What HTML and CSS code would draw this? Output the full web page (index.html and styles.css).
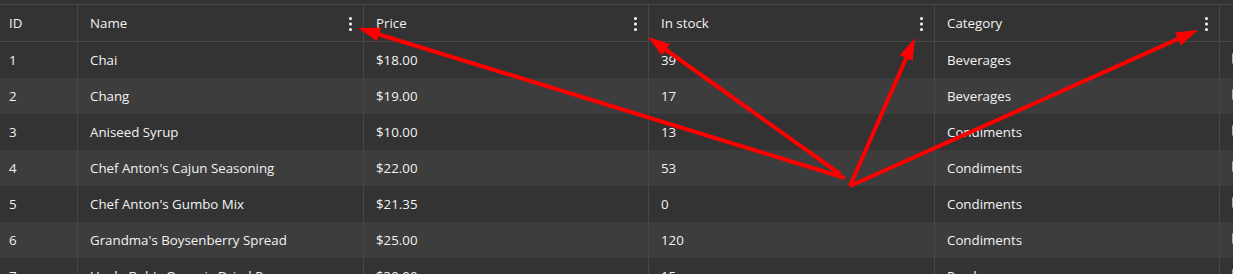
FILE: index.html
```html
<!DOCTYPE html>
<html>
<head>
<meta charset="utf-8">
<link rel="stylesheet" href="styles.css">
</head>
<body>
<div class="page">
  <div class="topbar"></div>
  <div class="grid">
    <div class="row head">
      <div class="cell id">ID</div>
      <div class="cell"><span>Name</span><svg class="kebab" width="3" height="14" viewBox="0 0 3 14"><circle cx="1.5" cy="1.5" r="1.5"/><circle cx="1.5" cy="7" r="1.5"/><circle cx="1.5" cy="12.5" r="1.5"/></svg></div>
      <div class="cell"><span>Price</span><svg class="kebab" width="3" height="14" viewBox="0 0 3 14"><circle cx="1.5" cy="1.5" r="1.5"/><circle cx="1.5" cy="7" r="1.5"/><circle cx="1.5" cy="12.5" r="1.5"/></svg></div>
      <div class="cell"><span>In stock</span><svg class="kebab" width="3" height="14" viewBox="0 0 3 14"><circle cx="1.5" cy="1.5" r="1.5"/><circle cx="1.5" cy="7" r="1.5"/><circle cx="1.5" cy="12.5" r="1.5"/></svg></div>
      <div class="cell"><span>Category</span><svg class="kebab" width="3" height="14" viewBox="0 0 3 14"><circle cx="1.5" cy="1.5" r="1.5"/><circle cx="1.5" cy="7" r="1.5"/><circle cx="1.5" cy="12.5" r="1.5"/></svg></div>
      <div class="cell last"></div>
    </div>
    <div class="row">
      <div class="cell id">1</div><div class="cell">Chai</div><div class="cell">$18.00</div><div class="cell">39</div><div class="cell">Beverages</div><div class="cell last"><span class="check"></span></div>
    </div>
    <div class="row alt">
      <div class="cell id">2</div><div class="cell">Chang</div><div class="cell">$19.00</div><div class="cell">17</div><div class="cell">Beverages</div><div class="cell last"><span class="check"></span></div>
    </div>
    <div class="row">
      <div class="cell id">3</div><div class="cell">Aniseed Syrup</div><div class="cell">$10.00</div><div class="cell">13</div><div class="cell">Condiments</div><div class="cell last"><span class="check"></span></div>
    </div>
    <div class="row alt">
      <div class="cell id">4</div><div class="cell">Chef Anton's Cajun Seasoning</div><div class="cell">$22.00</div><div class="cell">53</div><div class="cell">Condiments</div><div class="cell last"><span class="check"></span></div>
    </div>
    <div class="row">
      <div class="cell id">5</div><div class="cell">Chef Anton's Gumbo Mix</div><div class="cell">$21.35</div><div class="cell">0</div><div class="cell">Condiments</div><div class="cell last"><span class="check"></span></div>
    </div>
    <div class="row alt">
      <div class="cell id">6</div><div class="cell">Grandma's Boysenberry Spread</div><div class="cell">$25.00</div><div class="cell">120</div><div class="cell">Condiments</div><div class="cell last"><span class="check"></span></div>
    </div>
    <div class="row">
      <div class="cell id">7</div><div class="cell">Uncle Bob's Organic Dried Pears</div><div class="cell">$30.00</div><div class="cell">15</div><div class="cell">Produce</div><div class="cell last"><span class="check"></span></div>
    </div>
  </div>
  <svg class="annot" width="1233" height="274" viewBox="0 0 1233 274">
    <defs>
      <marker id="ah" markerUnits="userSpaceOnUse" markerWidth="22" markerHeight="16" refX="10" refY="8" orient="auto">
        <path d="M0,1 L22,8 L0,15 z" fill="#ff0000"/>
      </marker>
    </defs>
    <line x1="845" y1="178" x2="369.5" y2="31.5" marker-end="url(#ah)"/>
    <line x1="840" y1="174" x2="657.8" y2="44" marker-end="url(#ah)"/>
    <line x1="850" y1="186" x2="910.2" y2="49" marker-end="url(#ah)"/>
    <line x1="850" y1="186" x2="1187.1" y2="34.9" marker-end="url(#ah)"/>
  </svg>
</div>
</body>
</html>
```
FILE: styles.css
```css
html, body {
  margin: 0;
  padding: 0;
  background: #333333;
}
.page {
  position: relative;
  width: 1233px;
  height: 274px;
  overflow: hidden;
  font-family: "Open Sans", "Noto Sans", sans-serif;
  font-size: 13.3px;
  color: #f2f2f2;
}
.topbar {
  height: 4px;
  border-bottom: 1px solid #474747;
}
.row {
  display: grid;
  grid-template-columns: 78px 286px 285px 286px 285px 1fr;
  height: 36px;
  background: #333333;
}
.row.alt {
  background: #3d3d3d;
}
.row.head {
  height: 37px;
  border-bottom: 1px solid #474747;
  box-sizing: border-box;
}
.cell {
  display: flex;
  align-items: center;
  justify-content: space-between;
  padding: 0 11px 0 12px;
  border-right: 1px solid #474747;
  white-space: nowrap;
  overflow: hidden;
  box-sizing: border-box;
}
.cell.id {
  padding-left: 9px;
}
.cell.last {
  border-right: none;
  justify-content: flex-start;
}
.kebab {
  fill: #ffffff;
  margin-top: 1px;
  flex: none;
}
.check {
  display: block;
  width: 12px;
  height: 11px;
  margin-top: -3px;
  border: 1px solid #a8a8a8;
  border-radius: 1px;
  box-sizing: border-box;
}
.annot {
  position: absolute;
  left: 0;
  top: 0;
  pointer-events: none;
}
.annot line {
  stroke: #ff0000;
  stroke-width: 4;
}
```
